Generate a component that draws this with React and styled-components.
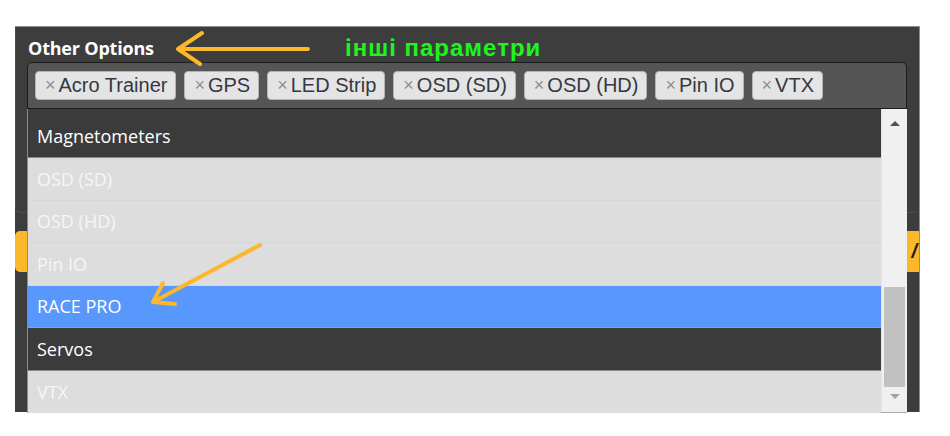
import React from "react";
import styled, { createGlobalStyle } from "styled-components";

const GlobalStyle = createGlobalStyle`
  html, body {
    margin: 0;
    padding: 0;
    background: #ffffff;
  }
  * {
    box-sizing: border-box;
  }
`;

const tags = ["Acro Trainer", "GPS", "LED Strip", "OSD (SD)", "OSD (HD)", "Pin IO", "VTX"];

const options = [
  { label: "Magnetometers", kind: "chosen" },
  { label: "OSD (SD)", kind: "disabled" },
  { label: "OSD (HD)", kind: "disabled" },
  { label: "Pin IO", kind: "disabled" },
  { label: "RACE PRO", kind: "active" },
  { label: "Servos", kind: "chosen" },
  { label: "VTX", kind: "disabled" },
];

const App = () => {
  return (
    <>
      <GlobalStyle />
      <Page>
        <Panel>
          <SectionBox>
            <Title>Other Options</Title>
            <SelectWrap>
              <SelectBox>
                {tags.map((t) => (
                  <Tag key={t}>
                    <Remove>×</Remove>
                    {t}
                  </Tag>
                ))}
              </SelectBox>
              <Dropdown>
                <Options>
                  {options.map((o) => (
                    <Option key={o.label} $kind={o.kind}>
                      {o.label}
                    </Option>
                  ))}
                </Options>
                <Scrollbar>
                  <ArrowBtn $h={28}>
                    <Triangle $up />
                  </ArrowBtn>
                  <Track>
                    <Thumb />
                  </Track>
                  <ArrowBtn $h={24} $top={6}>
                    <Triangle />
                  </ArrowBtn>
                </Scrollbar>
              </Dropdown>
            </SelectWrap>
          </SectionBox>
          <SaveBar>
            <SaveText>/</SaveText>
          </SaveBar>
        </Panel>

        <Note>інші параметри</Note>
        <Arrows width="950" height="436" viewBox="0 0 950 436">
          <g stroke="#fcb72a" strokeWidth="4" strokeLinecap="round" strokeLinejoin="round" fill="none">
            <path d="M308 49 L178 49 M202 33 L178 49 L200 64" />
            <path d="M260 245 L153 302 M163 283 L153 302 L175 304" />
          </g>
        </Arrows>
      </Page>
    </>
  );
};

export default App;

const Page = styled.div`
  position: relative;
  width: 950px;
  height: 436px;
  padding: 26px 0 0 15px;
  background: #ffffff;
`;

const Panel = styled.div`
  width: 905px;
  height: 386px;
  background: #3c3d3c;
  border-top: 1px solid #8e8e8e;
  border-right: 1px solid #8e8e8e;
  display: flex;
  flex-direction: column;
`;

const SectionBox = styled.div`
  height: 186px;
  padding: 0 0 0 12px;
  border-bottom: 1px solid #4d4e4d;
  border-left: 1px solid #4a4b4a;
  border-radius: 0 0 6px 6px;
`;

const Title = styled.h3`
  margin: 0;
  padding-top: 11px;
  height: 35px;
  font-family: "Open Sans", sans-serif;
  font-weight: 700;
  font-size: 18px;
  line-height: 20px;
  letter-spacing: -0.2px;
  color: #ffffff;
`;

const SelectWrap = styled.div`
  position: relative;
  width: 880px;
  margin-left: -1px;
`;

const SelectBox = styled.div`
  height: 47px;
  background: #555555;
  border: 1px solid #1c1c1c;
  border-radius: 5px 5px 0 0;
  padding: 8px 0 0 7px;
  display: flex;
  gap: 8px;
`;

const Tag = styled.span`
  height: 29px;
  display: flex;
  align-items: center;
  padding: 0 8px 0 9px;
  background: #e4e4e4;
  border: 1px solid #b4b4b4;
  border-radius: 4px;
  font-family: "Liberation Sans", Arial, sans-serif;
  font-size: 20px;
  color: #333844;
  white-space: nowrap;
`;

const Remove = styled.span`
  color: #8e8e8e;
  font-size: 18px;
  margin-right: 3px;
`;

const Dropdown = styled.div`
  position: absolute;
  top: 100%;
  left: 0;
  width: 880px;
  height: 304px;
  display: flex;
  background: #3b3b3b;
  border-left: 1px solid #8a8a8a;
  border-bottom: 1px solid #a8a8a8;
  z-index: 2;
`;

const Options = styled.div`
  flex: 1;
  padding-top: 6.5px;
  display: flex;
  flex-direction: column;
`;

const rowBg = { chosen: "#3b3b3b", disabled: "#dddddd", active: "#5897fb" };
const rowLine = { chosen: "#8a8a8a", disabled: "#d6d6d6", active: "#6fa5f8" };

const Option = styled.div`
  height: 42.5px;
  flex-shrink: 0;
  display: flex;
  align-items: center;
  padding-left: 9px;
  font-family: "Open Sans", sans-serif;
  font-size: 18px;
  color: ${(p) => (p.$kind === "disabled" ? "#f6f6f6" : "#ffffff")};
  background: ${(p) => rowBg[p.$kind]};
  border-bottom: 1px solid ${(p) => rowLine[p.$kind]};
  &:last-child {
    border-bottom: none;
  }
`;

const Scrollbar = styled.div`
  width: 26px;
  display: flex;
  flex-direction: column;
  background: #f0f0f0;
  border-left: 1px solid #e4e4e4;
`;

const ArrowBtn = styled.div`
  height: ${(p) => p.$h}px;
  display: flex;
  justify-content: center;
  align-items: ${(p) => (p.$top ? "flex-start" : "center")};
  padding-top: ${(p) => p.$top || 0}px;
`;

const Triangle = styled.div`
  width: 0;
  height: 0;
  border-left: 5px solid transparent;
  border-right: 5px solid transparent;
  ${(p) =>
    p.$up
      ? "border-bottom: 5px solid #505050;"
      : "border-top: 5px solid #a3a3a3;"}
`;

const Track = styled.div`
  flex: 1;
  padding: 150px 2px 0 2px;
`;

const Thumb = styled.div`
  height: 100px;
  background: #c1c1c1;
`;

const SaveBar = styled.div`
  margin-top: 18px;
  height: 41px;
  background: #fcb829;
  border-radius: 5px 0 0 5px;
  display: flex;
  align-items: center;
  justify-content: flex-end;
  padding-right: 2px;
`;

const SaveText = styled.span`
  font-family: "Liberation Sans", Arial, sans-serif;
  font-style: italic;
  font-weight: 700;
  font-size: 20px;
  color: #1d1d1d;
`;

const Note = styled.span`
  position: absolute;
  left: 345px;
  top: 34px;
  font-family: "Liberation Sans", Arial, sans-serif;
  font-weight: 700;
  font-size: 24px;
  letter-spacing: 1px;
  color: #1ff41f;
  white-space: nowrap;
`;

const Arrows = styled.svg`
  position: absolute;
  left: 0;
  top: 0;
  pointer-events: none;
  z-index: 3;
`;
